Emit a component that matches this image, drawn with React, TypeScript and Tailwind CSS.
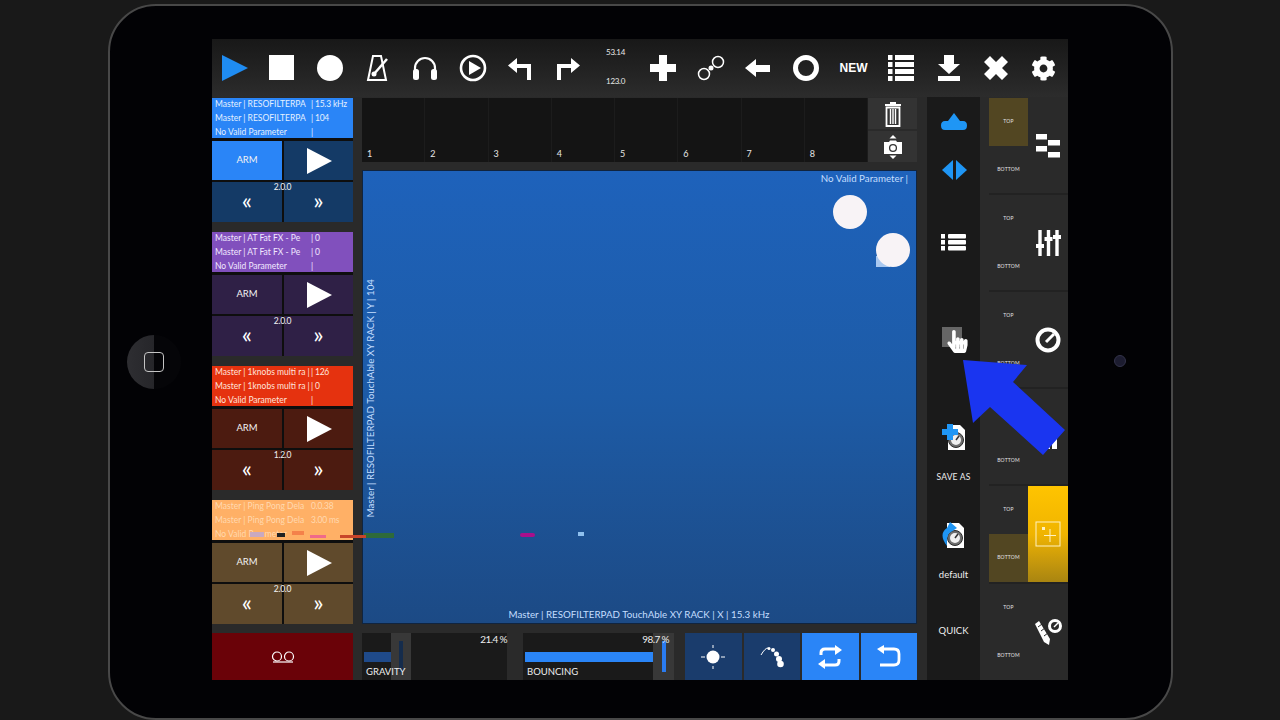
import React from "react";
import { FaCog, FaHandPointer } from "react-icons/fa";

const W = "#ffffff";

function Svg({ w, h, children, className = "" }: { w: number; h: number; children: React.ReactNode; className?: string }) {
  return (
    <svg width={w} height={h} viewBox={`0 0 ${w} ${h}`} className={"block " + className}>
      {children}
    </svg>
  );
}

const TopIcons: React.ReactNode[] = [
  <Svg w={26} h={26}><polygon points="0,0 26,13 0,26" fill="#1f8cf2" /></Svg>,
  <Svg w={26} h={26}><rect width="25" height="25" fill={W} /></Svg>,
  <Svg w={26} h={26}><circle cx="13" cy="13" r="13" fill={W} /></Svg>,
  <Svg w={24} h={28}>
    <polygon points="7,2 15,2 20,26 2,26" fill="none" stroke={W} strokeWidth="2" />
    <line x1="8" y1="20" x2="21" y2="5" stroke={W} strokeWidth="2.5" />
    <circle cx="8" cy="20" r="2.5" fill={W} />
  </Svg>,
  <Svg w={26} h={26}>
    <path d="M3 17V13a10 10 0 0 1 20 0v4" fill="none" stroke={W} strokeWidth="2.2" />
    <rect x="1" y="14" width="6" height="11" rx="2.5" fill={W} />
    <rect x="19" y="14" width="6" height="11" rx="2.5" fill={W} />
  </Svg>,
  <Svg w={28} h={28}>
    <circle cx="14" cy="14" r="12" fill="none" stroke={W} strokeWidth="2.6" />
    <polygon points="10,7 22,14 10,21" fill={W} />
  </Svg>,
  <Svg w={24} h={24}><path d="M9 2L0 9.5L9 17V12H19V24H23V8H9Z" fill={W} /></Svg>,
  <Svg w={24} h={24}><path d="M15 2L24 9.5L15 17V12H5V24H1V8H15Z" fill={W} /></Svg>,
  <div className="flex flex-col items-center gap-[19px] mb-[3px] text-[8px] leading-[10px] text-[#e8e8e8] tracking-[-0.3px]">
    <span>53.14</span>
    <span>123.0</span>
  </div>,
  <Svg w={26} h={26}><path d="M9 0H17V9H26V17H17V26H9V17H0V9H9Z" fill={W} /></Svg>,
  <Svg w={28} h={26}>
    <circle cx="7" cy="19" r="5.5" fill="none" stroke={W} strokeWidth="1.5" />
    <circle cx="21" cy="7" r="5.5" fill="none" stroke={W} strokeWidth="1.5" />
    <circle cx="14" cy="13" r="2.5" fill={W} />
  </Svg>,
  <Svg w={26} h={20}><path d="M0 10L11 1V7H25V14H11V19Z" fill={W} /></Svg>,
  <Svg w={26} h={26}><circle cx="13" cy="13" r="10.5" fill="none" stroke={W} strokeWidth="5" /></Svg>,
  <span className="text-[12px] font-bold text-white font-['Liberation_Sans',sans-serif]">NEW</span>,
  <Svg w={26} h={26}>
    {[0, 7, 14, 21].map((y) => (
      <g key={y} fill={W}>
        <rect x="0" y={y} width="4.5" height="5" />
        <rect x="7" y={y} width="19" height="5" />
      </g>
    ))}
  </Svg>,
  <Svg w={24} h={26}><path d="M7 0H17V9H23L12 19L1 9H7Z M1 21H23V26H1Z" fill={W} /></Svg>,
  <Svg w={24} h={24}><path d="M6 0L12 6L18 0L24 6L18 12L24 18L18 24L12 18L6 24L0 18L6 12L0 6Z" fill={W} /></Svg>,
  <FaCog size={25} color={W} />,
];

function TopBar() {
  return (
    <div className="h-[58px] shrink-0 bg-gradient-to-b from-[#181818] to-[#2c2c2c] -ml-[1px] grid grid-cols-[repeat(18,47.6px)] items-center">
      {TopIcons.map((ic, i) => (
        <div key={i} className="flex justify-center items-center">{ic}</div>
      ))}
    </div>
  );
}

type Track = { hdr: string; txt: string; rows: string[][]; cell: string; ver: string; active?: boolean };

const tracks: Track[] = [
  {
    hdr: "bg-[#2a85f7]",
    txt: "text-[#e4f0ff]",
    cell: "bg-[#143a66]",
    ver: "2.0.0",
    active: true,
    rows: [["Master | RESOFILTERPA", "| 15.3 kHz"], ["Master | RESOFILTERPA", "| 104"], ["No Valid Parameter", "|"]],
  },
  {
    hdr: "bg-[#8150bd]",
    txt: "text-[#f2e8ff]",
    cell: "bg-[#2f2046]",
    ver: "2.0.0",
    rows: [["Master | AT Fat FX - Pe", "| 0"], ["Master | AT Fat FX - Pe", "| 0"], ["No Valid Parameter", "|"]],
  },
  {
    hdr: "bg-[#e5320f]",
    txt: "text-[#ffe4dc]",
    cell: "bg-[#4c1b10]",
    ver: "1.2.0",
    rows: [["Master | 1knobs multi ra |", "| 126"], ["Master | 1knobs multi ra |", "| 0"], ["No Valid Parameter", "|"]],
  },
  {
    hdr: "bg-[#ffb066]",
    txt: "text-[#ffd9b0]",
    cell: "bg-[#604a2c]",
    ver: "2.0.0",
    rows: [["Master | Ping Pong Dela", "0.0.38"], ["Master | Ping Pong Dela", "3.00 ms"], ["No Valid Parameter", ""]],
  },
];

function TrackBlock({ t }: { t: Track }) {
  return (
    <div className="h-[124px] mb-[10px] flex flex-col bg-[#0e0e0e]">
      <div className={`h-[40px] ${t.hdr} ${t.txt} pl-[3px] flex flex-col justify-center text-[8.5px] leading-[14px]`}>
        {t.rows.map((r, i) => (
          <div key={i} className="flex">
            <span className="w-[96px] shrink-0 whitespace-nowrap overflow-hidden">{r[0]}</span>
            <span className="whitespace-nowrap tracking-[-0.2px]">{r[1]}</span>
          </div>
        ))}
      </div>
      <div className="h-[39px] mt-[3px] flex gap-[2px]">
        <div className={`w-[70px] ${t.active ? "bg-[#2a85f7]" : t.cell} flex items-center justify-center text-[9.5px] text-[#f2f2f2]`}>ARM</div>
        <div className={`flex-1 ${t.cell} flex items-center justify-center`}>
          <Svg w={26} h={26}><polygon points="1,0 26,13 1,26" fill={W} /></Svg>
        </div>
      </div>
      <div className="h-[40px] mt-[2px] flex gap-[2px] relative">
        <div className={`w-[70px] ${t.cell} flex items-center justify-center text-[24px] leading-none text-white pb-[5px]`}>«</div>
        <div className={`flex-1 ${t.cell} flex items-center justify-center text-[24px] leading-none text-white pb-[5px]`}>»</div>
        <span className="absolute left-0 right-0 top-0 text-center text-[8.5px] leading-[10px] text-[#f2f2f2] tracking-[-0.3px]">{t.ver}</span>
      </div>
    </div>
  );
}

function LeftCol() {
  return (
    <div className="w-[141px] shrink-0 pt-[1px] flex flex-col relative">
      {tracks.map((t, i) => <TrackBlock key={i} t={t} />)}
      <div className="h-[47px] mt-[-1px] bg-[#6a0208] flex items-center justify-center">
        <Svg w={24} h={12}>
          <circle cx="6" cy="5.5" r="4.5" fill="none" stroke={W} strokeWidth="1.2" />
          <circle cx="18" cy="5.5" r="4.5" fill="none" stroke={W} strokeWidth="1.2" />
          <line x1="2" y1="11" x2="22" y2="11" stroke={W} strokeWidth="1.2" />
        </Svg>
      </div>
    </div>
  );
}

function Pad() {
  return (
    <div className="h-[454px] mt-[8px] bg-gradient-to-b from-[#1e62bb] via-[#1d5ba6] to-[#1c4a85] relative border border-[#10243f] text-[#c4deff] text-[9.75px]">
      <span className="absolute right-[8px] top-0">No Valid Parameter |</span>
      <span className="absolute left-0 right-0 bottom-[1px] text-center pr-[1px]">Master | RESOFILTERPAD TouchAble XY RACK | X | 15.3 kHz</span>
      <span className="absolute left-0 bottom-[106px] whitespace-nowrap [writing-mode:vertical-rl] rotate-180">
        Master | RESOFILTERPAD TouchAble XY RACK | Y | 104
      </span>
      <div className="absolute left-[470px] top-[24px] w-[34px] h-[34px] rounded-full bg-[#f8f3f6]" />
      <div className="absolute left-[513px] top-[85px] w-[14px] h-[11px] bg-[#a9c8f0]" />
      <div className="absolute left-[513px] top-[62px] w-[34px] h-[34px] rounded-full bg-[#f8f3f6]" />
      <div className="absolute left-[157px] top-[362px] w-[15px] h-[4px] rounded bg-[#a80f8c]" />
      <div className="absolute left-[215px] top-[361px] w-[6px] h-[4px] bg-[#8fc0ee]" />
      <div className="absolute left-[1px] top-[362px] w-[30px] h-[2px] bg-[#2e6a3a]" />
    </div>
  );
}

function Slider({ w, fillW, fillCls, barCls, label, value, handleW, valueCls }: { w: number; fillW: number; fillCls: string; barCls: string; label: string; value: string; handleW: number; valueCls: string }) {
  return (
    <div style={{ width: w }} className="relative h-full bg-[#1a1a1a] flex items-stretch pl-[2px] shrink-0">
      <div style={{ width: fillW }} className="shrink-0 pt-[19px]"><div className={`h-[10px] ${fillCls}`} /></div>
      <div style={{ width: handleW }} className="shrink-0 bg-[#383838] flex justify-center pt-[8px] pb-[8px]">
        <div className={`w-[4px] ${barCls}`} />
      </div>
      <span className="absolute left-[4px] bottom-[2px] text-[9.5px] leading-[12px] text-[#eeeeee]">{label}</span>
      <span className={`absolute ${valueCls} top-0 text-[10px] leading-[12px] text-[#eeeeee] tracking-[-0.6px]`}>{value}</span>
    </div>
  );
}

function BottomBtn({ active, children }: { active?: boolean; children: React.ReactNode }) {
  return <div className={`flex-1 ${active ? "bg-[#2a85f7]" : "bg-[#1a3c6c]"} flex items-center justify-center`}>{children}</div>;
}

function Center() {
  return (
    <div className="w-[555px] shrink-0 flex flex-col">
      <div className="h-[65px] flex pt-[1px]">
        <div className="w-[506px] flex bg-[#141414]">
          {[1, 2, 3, 4, 5, 6, 7, 8].map((n) => (
            <div key={n} className="flex-1 border-r border-[#1c1c1c] flex items-end pl-[5px] pb-[3px] text-[9px] leading-[11px] text-[#e6e6e6]">{n}</div>
          ))}
        </div>
        <div className="w-[49px] flex flex-col gap-[2px]">
          <div className="h-[32px] bg-[#333333] flex items-center justify-center">
            <Svg w={18} h={26}>
              <path d="M1 3H6V1H12V3H17V5H1Z" fill={W} />
              <path d="M2.5 6.5H15.5V25H2.5Z" fill="none" stroke={W} strokeWidth="1.8" />
              <path d="M6.5 8V23M9 8V23M11.5 8V23" stroke={W} strokeWidth="1.4" />
            </Svg>
          </div>
          <div className="h-[31px] bg-[#333333] flex items-center justify-center">
            <Svg w={20} h={26}>
              <polygon points="10,1 13.5,4.5 6.5,4.5" fill={W} />
              <polygon points="10,25 13.5,21.5 6.5,21.5" fill={W} />
              <path d="M1 8H6L7 6.5H13L14 8H19V20H1Z" fill={W} />
              <circle cx="10" cy="14" r="3.4" fill="none" stroke="#333333" strokeWidth="1.3" />
            </Svg>
          </div>
        </div>
      </div>
      <Pad />
      <div className="h-[47px] mt-[9px] flex">
        <Slider w={145} fillW={27} fillCls="bg-[#1f4a8a]" barCls="bg-[#152c4c]" label="GRAVITY" value="21.4 %" handleW={20} valueCls="right-0" />
        <div className="w-[16px] shrink-0" />
        <Slider w={151} fillW={128} fillCls="bg-[#2a85f7]" barCls="bg-[#2a7bf0]" label="BOUNCING" value="98.7 %" handleW={21} valueCls="right-[5px]" />
        <div className="w-[11px] shrink-0" />
        <div className="flex-1 flex gap-[2px]">
          <BottomBtn>
            <Svg w={26} h={26}>
              <circle cx="13" cy="13" r="6.5" fill={W} />
              <path d="M13 1V4M13 22V25M1 13H5M21 13H25" stroke={W} strokeWidth="1" />
            </Svg>
          </BottomBtn>
          <BottomBtn>
            <Svg w={26} h={24}>
              <path d="M2 10Q6 3 9 3" fill="none" stroke={W} strokeWidth="1" />
              <circle cx="10" cy="3.5" r="1.5" fill={W} />
              <circle cx="14" cy="5" r="2" fill={W} />
              <circle cx="17.5" cy="9" r="2.5" fill={W} />
              <circle cx="20" cy="14" r="3" fill={W} />
              <circle cx="21.5" cy="19" r="3.3" fill={W} />
            </Svg>
          </BottomBtn>
          <BottomBtn active>
            <Svg w={26} h={24}>
              <path d="M4 10V8Q4 4 8 4H20M22 14V16Q22 20 18 20H6" fill="none" stroke={W} strokeWidth="3" />
              <polygon points="18,0 25,5 18,10" fill={W} />
              <polygon points="8,14 1,19 8,24" fill={W} />
            </Svg>
          </BottomBtn>
          <BottomBtn active>
            <Svg w={26} h={24}>
              <path d="M7 4H18Q23 4 23 9V15Q23 20 18 20H4" fill="none" stroke={W} strokeWidth="2.8" />
              <polygon points="8,0 1,4 8,9" fill={W} />
            </Svg>
          </BottomBtn>
        </div>
      </div>
    </div>
  );
}

function Doc({ children }: { children: React.ReactNode }) {
  return (
    <div className="relative w-[24px] h-[26px]">
      <Svg w={24} h={26}>
        <path d="M6 1H18L23 6V26H6Z" fill={W} />
        <circle cx="14" cy="16" r="7.5" fill="#6e6e6e" stroke="#2a2a2a" strokeWidth="1" />
        <circle cx="14" cy="16" r="5" fill="#f0f0f0" />
        <path d="M14 16L17 12" stroke="#333333" strokeWidth="1.5" />
      </Svg>
      <div className="absolute left-0 top-0">{children}</div>
    </div>
  );
}

function RightCol() {
  return (
    <div className="w-[53px] shrink-0 bg-[#1a1a1a] flex flex-col items-center text-[#eeeeee] text-[9px]">
      <div className="h-[49px] flex items-center justify-center">
        <Svg w={26} h={17}>
          <path d="M13 0L19 8H22Q26 8 26 12.5T22 17H4Q0 17 0 12.5T4 8H7Z" fill="#1f96f5" />
        </Svg>
      </div>
      <div className="h-[48px] flex items-center justify-center">
        <Svg w={26} h={20}>
          <polygon points="12,0 12,20 1,10" fill="#1f96f5" />
          <polygon points="15,0 15,20 26,10" fill="#1f96f5" />
        </Svg>
      </div>
      <div className="h-[97px] flex items-center justify-center">
        <Svg w={25} h={17}>
          {[0, 6, 12].map((y) => (
            <g key={y} fill={W}>
              <rect x="0" y={y} width="4" height="4.5" />
              <rect x="7" y={y} width="18" height="4.5" rx="1" />
            </g>
          ))}
        </Svg>
      </div>
      <div className="h-[97px] flex items-center justify-center">
        <div className="relative w-[22px] h-[22px]">
          <div className="absolute left-[-1px] top-[-2px] w-[20px] h-[20px] bg-[#666666]" />
          <FaHandPointer size={23} color={W} className="absolute left-[3px] top-[1px]" />
        </div>
      </div>
      <div className="h-[97px] pt-[36px] flex flex-col items-center">
        <Doc><Svg w={16} h={16}><path d="M5 0H11V5H16V11H11V16H5V11H0V5H5Z" fill="#1f96f5" /></Svg></Doc>
        <span className="mt-[22px] text-[8.5px] leading-[11px] tracking-[0.2px]">SAVE AS</span>
      </div>
      <div className="h-[95px] pt-[37px] flex flex-col items-center">
        <Doc><Svg w={16} h={26}><path d="M9 0L16 6L10 10Q5 12 6 24Q-3 12 6 6Z" fill="#1f96f5" /></Svg></Doc>
        <span className="mt-[21px] text-[9.5px] leading-[11px]">default</span>
      </div>
      <div className="pt-[45px] text-[9.5px] leading-[12px]">QUICK</div>
    </div>
  );
}

const presetIcons: React.ReactNode[] = [
  <Svg w={24} h={24}>
    <rect x="0" y="0" width="11" height="5.5" fill={W} />
    <rect x="12" y="6" width="12" height="5.5" fill={W} />
    <rect x="0" y="12" width="11" height="5.5" fill={W} />
    <rect x="12" y="18" width="12" height="5.5" fill={W} />
  </Svg>,
  <Svg w={25} h={26}>
    <path d="M4 0V26M12.5 0V26M21 0V26" stroke={W} strokeWidth="3.4" />
    <rect x="0" y="14" width="8" height="4" fill={W} />
    <rect x="8.5" y="7" width="8" height="4" fill={W} />
    <rect x="17" y="5" width="8" height="4" fill={W} />
  </Svg>,
  <Svg w={26} h={26}>
    <circle cx="13" cy="13" r="10.5" fill="none" stroke={W} strokeWidth="4" />
    <path d="M11 15L19 7" stroke={W} strokeWidth="3" />
  </Svg>,
  <Svg w={26} h={26}>
    <rect x="3" y="16" width="5" height="9" fill={W} />
    <rect x="10" y="10" width="5" height="15" fill={W} />
    <rect x="17" y="4" width="5" height="21" fill={W} />
  </Svg>,
  <Svg w={26} h={26}>
    <rect x="1" y="1" width="24" height="24" fill="none" stroke="#fff2c0" strokeWidth="1" />
    <rect x="7" y="6" width="3" height="3" fill="#fff2c0" />
    <path d="M15 8V21M9 14.5H21" stroke="#fff2c0" strokeWidth="1" />
  </Svg>,
  <Svg w={28} h={28}>
    <path d="M1 6L5 3L16 21L15 27L10 24Z" fill={W} />
    <path d="M4 9L8 6M7 13L11 10M10 18L14 15" stroke="#2a2a2a" strokeWidth="1" />
    <circle cx="21" cy="8" r="5.5" fill="none" stroke={W} strokeWidth="3" />
    <path d="M20 9L24 5" stroke={W} strokeWidth="1.5" />
  </Svg>,
];

function Presets() {
  const heights = [97, 97, 97, 97, 98, 96];
  return (
    <div className="w-[79px] shrink-0 pt-[1px] flex flex-col">
      {presetIcons.map((ic, i) => (
        <div key={i} style={{ height: heights[i] }} className="flex bg-[#2a2a2a] border-b-[2px] border-[#222222] last:border-b-0">
          <div className="w-[39px] shrink-0 flex flex-col text-[5px] tracking-[0.2px] text-[#e0e0e0]">
            <div className={`flex-1 flex items-center justify-center ${i === 0 ? "bg-[#524622]" : ""}`}>TOP</div>
            <div className={`flex-1 flex items-center justify-center ${i === 4 ? "bg-[#524622]" : ""}`}>BOTTOM</div>
          </div>
          <div className={`flex-1 flex items-center justify-center ${i === 4 ? "bg-gradient-to-b from-[#ffc400] via-[#f0b400] to-[#a98510]" : ""}`}>{ic}</div>
        </div>
      ))}
    </div>
  );
}

export default function App() {
  return (
    <div className="w-[1280px] h-[720px] overflow-hidden bg-[#191919] pt-[4px] pl-[108px] font-['Lato','Noto_Sans',sans-serif] relative">
      <div className="w-[1065px] h-[716px] rounded-[48px] border-2 border-[#484848] bg-[#020205] flex items-start">
        <div className="ml-[17px] mt-[329px] w-[54px] h-[54px] shrink-0 rounded-full bg-[linear-gradient(90deg,#2e2e32_0%,#26262a_50%,#050508_50%)] flex items-center justify-center">
          <div className="w-[20px] h-[20px] rounded-[4px] border-[1.5px] border-[#c4c4c4]" />
        </div>
        <div className="ml-[31px] mt-[33px] w-[856px] h-[641px] shrink-0 bg-[#2a2a2a] flex flex-col overflow-hidden">
          <TopBar />
          <div className="flex flex-1 min-h-0">
            <LeftCol />
            <div className="w-[9px] shrink-0" />
            <Center />
            <div className="w-[10px] shrink-0" />
            <RightCol />
            <div className="w-[9px] shrink-0" />
            <Presets />
          </div>
        </div>
        <div className="ml-[46px] mt-[349px] w-[12px] h-[12px] shrink-0 rounded-full bg-[#1c1c30] border border-[#33334a]" />
      </div>
      <svg width="1280" height="720" viewBox="0 0 1280 720" className="absolute left-0 top-0 pointer-events-none">
        <polygon points="963,360 1027,365 1013,382 1065,430 1043,455 990,407 973,423" fill="#1a35f0" />
        <rect x="250" y="532" width="14" height="5" fill="#c9a9c0" />
        <rect x="277" y="533" width="8" height="4" fill="#222222" />
        <rect x="292" y="531" width="12" height="4" fill="#f4814a" />
        <rect x="310" y="535" width="16" height="3" fill="#f06a8a" />
        <rect x="340" y="535" width="30" height="3" fill="#c8452a" />
        <rect x="366" y="535" width="28" height="3" fill="#2e6a3a" />
      </svg>
    </div>
  );
}
